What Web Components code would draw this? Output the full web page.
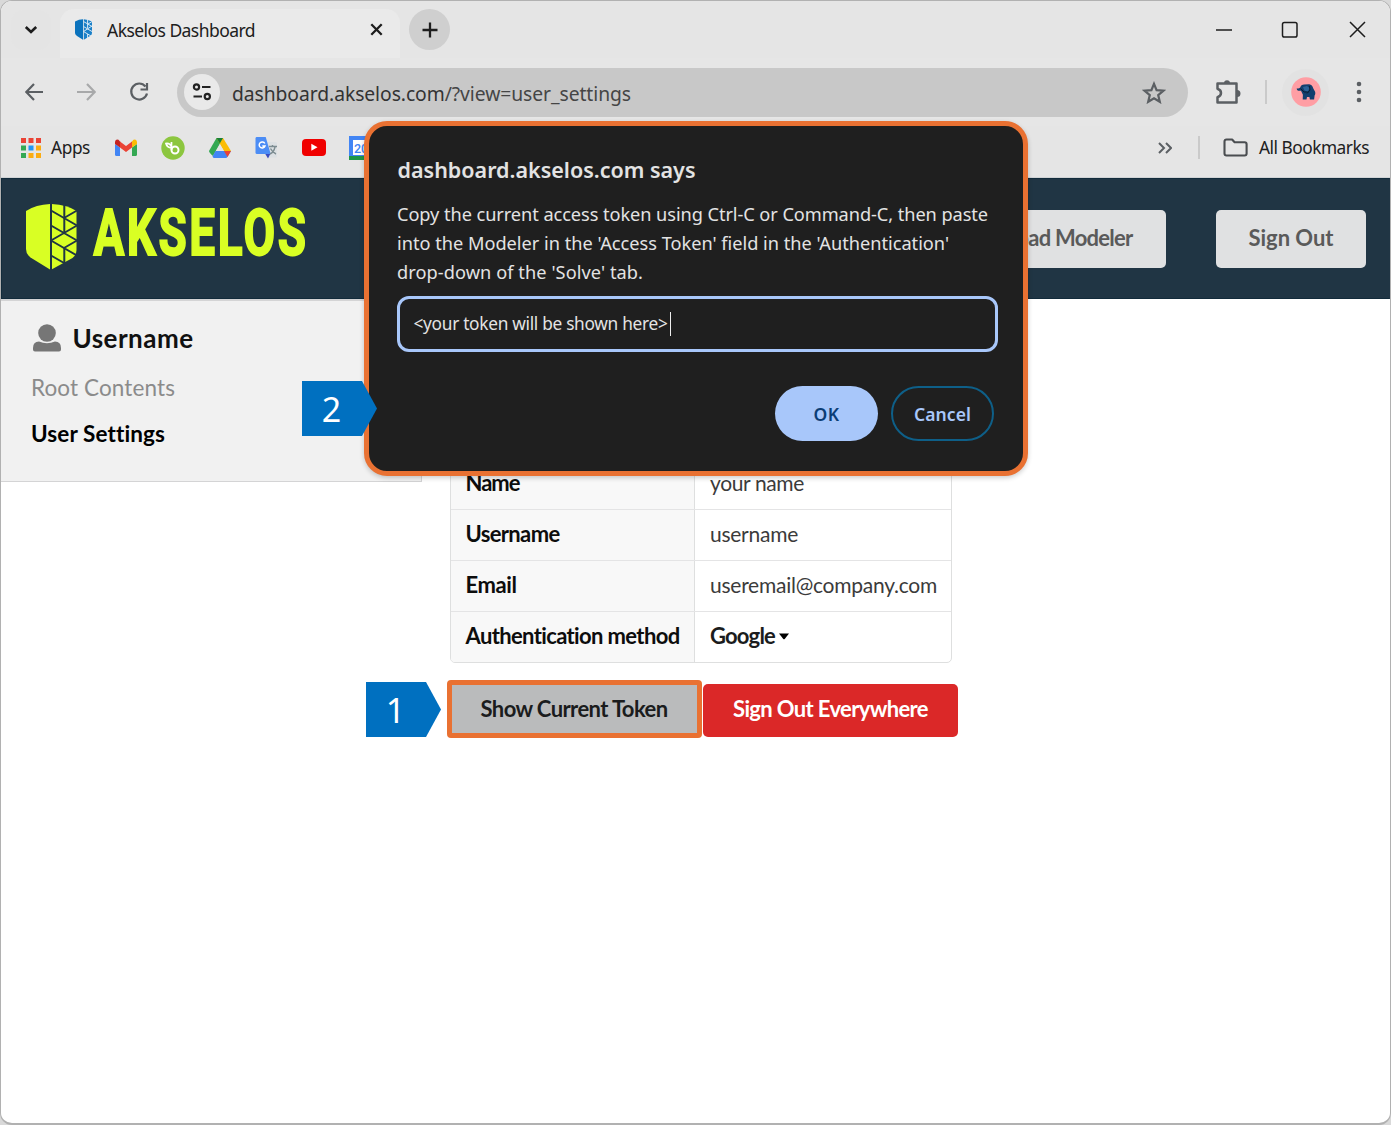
<!DOCTYPE html>
<html lang="en">
<head>
<meta charset="utf-8">
<title>Akselos Dashboard</title>
<style>
  html, body{ margin:0; width:1391px; height:1125px; overflow:hidden; background:#d9d9d9; }
  body{ font-family:"Noto Sans","Open Sans",sans-serif; color:#202020; }
</style>
</head>
<body>
<browser-window>
  <tab-strip slot="chrome" label="Akselos Dashboard"></tab-strip>
  <nav-toolbar slot="chrome"></nav-toolbar>
  <bookmark-bar slot="chrome"></bookmark-bar>
  <site-header>
    <ui-button kind="header" style="width:244px"><fit-text w="177">Download Modeler</fit-text></ui-button>
    <ui-button kind="header" style="width:150px"><fit-text w="85">Sign Out</fit-text></ui-button>
  </site-header>
  <page-body>
    <side-menu slot="side" user="Username"></side-menu>
    <settings-table></settings-table>
    <div style="display:flex;align-items:center;gap:1px;margin:17px 0 0 -3px">
      <ui-button kind="token"><fit-text w="187">Show Current Token</fit-text></ui-button>
      <ui-button kind="danger"><fit-text w="195">Sign Out Everywhere</fit-text></ui-button>
    </div>
  </page-body>
  <prompt-dialog slot="overlay"></prompt-dialog>
  <step-callout slot="overlay" style="left:302px;top:381px">2</step-callout>
  <step-callout slot="overlay" style="left:366px;top:682px">1</step-callout>
</browser-window>

<script>
function define(name, html, setup){
  customElements.define(name, class extends HTMLElement{
    constructor(){
      super();
      this.attachShadow({mode:"open"}).innerHTML = html;
    }
    connectedCallback(){ if(setup) setup(this, this.shadowRoot); }
  });
}

/* ---------- window frame ---------- */
define("browser-window", `
  <style>
    :host{ display:flex; flex-direction:column; position:relative; box-sizing:border-box; width:1391px; height:1125px;
      border:1px solid #b1b1b1; border-bottom-width:2px; border-radius:12px; overflow:hidden; background:#fff; }
    .chrome{ height:177px; background:#e5e5e5; border-bottom:1px solid #d0d3d5; box-sizing:border-box; }
  </style>
  <div class="chrome"><slot name="chrome"></slot></div>
  <slot></slot>
  <slot name="overlay"></slot>
`);

define("tab-strip", `
  <style>
    :host{ display:flex; height:57px; align-items:center; box-sizing:border-box; }
    .search{ width:40px; margin-left:10px; height:40px; border-radius:13px; background:#e4e4e4; display:grid; place-items:center; }
    .tab{ display:flex; align-items:center; width:340px; height:49px; margin:8px 0 0 9px; padding:0 17px 8px 15px; box-sizing:border-box;
      background:#eaeaea; border-radius:14px 14px 0 0; font-size:17.500px; }
    .fav{ margin-right:15px; }
    .x{ margin-left:auto; }
    .new{ width:41px; height:41px; border-radius:50%; background:#cfcfcf; margin-left:9px; display:grid; place-items:center; }
    .win{ margin-left:auto; display:flex; align-items:center; gap:49.700px; margin-right:24px; }
    svg{ display:block; fill:none; stroke:#1d1d1d; }
  </style>
  <div class="search"><svg width="14" height="10" viewBox="0 0 14 10" stroke-width="2.6"><path d="M1.8 2l5.2 5 5.2-5"/></svg></div>
  <div class="tab">
    <svg class="fav" width="17" height="21" viewBox="0 0 17 21" style="stroke:none">
      <path fill="#0b73bd" d="M0 2.5Q4 .3 8 .2V20.8L2 17Q0 15.6 0 14z"/>
      <path fill="#1b80c8" d="M8.8.2Q13 .5 17 2.5V14q0 1.800-2 3L8.800 20.800z"/>
      <path stroke="#d5e7f4" stroke-width="1" fill="none" d="M8.500 2.500l8.500 5M8.500 7.500l8.500 5M17 7l-8.500 5.500M8.500 12.500l7.500 4.500M12.600 0v9M12.600 15v4M17 2.500l-4 2.500"/>
    </svg>
    <fit-text w="148"></fit-text>
    <svg class="x" width="13" height="13" viewBox="0 0 13 13" stroke-width="2.300"><path d="M1.300 1.300l10.400 10.400M11.700 1.300L1.300 11.700"/></svg>
  </div>
  <div class="new"><svg width="16" height="16" viewBox="0 0 16 16" stroke-width="2.300"><path d="M8 .5v15M.5 8h15"/></svg></div>
  <div class="win">
    <svg width="16" height="16" viewBox="0 0 16 16" stroke-width="1.500"><path d="M0 8h16"/></svg>
    <svg width="18" height="18" viewBox="0 0 18 18" stroke-width="1.500"><rect x="1.500" y="1.500" width="14.500" height="14.500" rx="1.800"/></svg>
    <svg width="17" height="17" viewBox="0 0 17 17" stroke-width="1.500"><path d="M1 1l15 15M16 1L1 16"/></svg>
  </div>
`, (el, root) => { root.querySelector("fit-text").textContent = el.getAttribute("label"); });

/* ---------- toolbar ---------- */
define("nav-toolbar", `
  <style>
    :host{ display:flex; align-items:center; height:68px; padding-left:23px; background:#e6e6e6; }
    svg{ display:block; flex:none; fill:none; stroke:#5b5f63; stroke-width:2.200; }
    .bar{ display:flex; align-items:center; width:1011px; height:49px; margin-left:28px; border-radius:25px; background:#c8c8c8;
      padding:0 22px 0 7px; box-sizing:border-box; color:#454545; font-size:19.300px; }
    .bar fit-text{ padding-top:2px; }
    .site{ width:36px; height:36px; border-radius:50%; background:#e9e9e9; display:grid; place-items:center; margin-right:12px; }
    .star{ margin-left:auto; }
    .sep{ width:2px; height:24px; background:#cacaca; margin:0 9px 0 24px; }
    .who{ width:47px; height:47px; border-radius:50%; background:#e2e2e2; display:grid; place-items:center; margin-left:6px; }
  </style>
  <svg width="20" height="18" viewBox="0 0 20 18"><path d="M19 9H3M10 1L2.300 9l7.700 8"/></svg>
  <svg width="20" height="18" viewBox="0 0 20 18" style="margin-left:33px;stroke:#a8a9aa"><path d="M0 9h17M10 1l7.700 8-7.700 8"/></svg>
  <svg width="20" height="20" viewBox="0 0 20 20" style="margin-left:32px"><path d="M16.500 4.500A8 8 0 1 0 18 11.500M18 1v6.500h-6.500"/></svg>
  <div class="bar">
    <div class="site"><svg width="20" height="18" viewBox="0 0 20 18" style="stroke:#222"><circle cx="4.500" cy="4" r="2.600"/><path d="M10 4h8.500M1.500 13.500H10"/><circle cx="15.300" cy="13.500" r="2.600"/></svg></div>
    <fit-text w="399"><span style="color:#333">dashboard.akselos.com</span>/?view=user_settings</fit-text>
    <svg class="star" width="24" height="23" viewBox="0 0 24 23"><path d="M12 2.800l2.600 6.300 6.800.600-5.200 4.400 1.600 6.700L12 17.200l-5.800 3.600 1.600-6.700L2.600 9.700l6.800-.600z"/></svg>
  </div>
  <svg width="26" height="25" viewBox="0 0 26 25" style="margin-left:27px;stroke-width:2.500">
    <path stroke-linejoin="round" d="M2.500 3.500h19v19h-19v-5.300q3.500-1.200 3.500-4.200t-3.500-4.200z"/>
    <path fill="#5b5f63" stroke="none" d="M9 3.200a3 3 0 0 1 6 0zM22 10a3.500 3.500 0 0 1 0 7z"/>
  </svg>
  <div class="sep"></div>
  <div class="who"><svg width="30" height="30" viewBox="0 0 30 30" style="stroke:none">
    <circle cx="15" cy="15" r="14.800" fill="#ff9ea4"/>
    <path fill="#123f6e" d="M5.800 11.200q1.800 1 3.400-.8.800-2.800 4-3l5-.1q3.200.600 4 4l2 3.800q.500 2.500-.6 3.300l-.5 4h-4.200l-.500-2.500-2.400.1-.500 2.500h-3.800l.2-4.800-1.900-4q-4.400.8-4.200-2.500z"/>
    <path fill="#2a6298" d="M12 10l4-1 2.500 2-1.800 4-3.500-1.800z"/>
    <path stroke="#0b1e36" stroke-width="1" d="M9.500 11.500l3.500 3.500 4.500 0M18.500 9l.5 4-3 3.500"/>
  </svg></div>
  <svg width="6" height="24" viewBox="0 0 6 24" style="margin-left:27px;fill:#5b5f63;stroke:none"><circle cx="3" cy="4" r="2.300"/><circle cx="3" cy="12" r="2.300"/><circle cx="3" cy="20" r="2.300"/></svg>
`);

/* ---------- bookmarks ---------- */
define("bookmark-bar", `
  <style>
    :host{ display:flex; align-items:center; height:43px; padding-left:19.500px; font-size:17.300px; }
    svg{ display:block; flex:none; }
    .right{ position:relative; margin-left:auto; display:flex; align-items:center; margin-right:21px; }
    i{ width:2px; height:23px; background:#cacaca; margin:0 23px 0 26px; }
  </style>
  <svg width="20" height="20" viewBox="0 0 20 20">
    <path fill="#ea4335" d="M0 0h5v5H0zM7.500 0h5v5h-5zM15 0h5v5h-5z"/>
    <path fill="#34a853" d="M0 7.500h5v5H0zM0 15h5v5H0z"/><path fill="#2196f3" d="M7.500 7.500h5v5h-5z"/>
    <path fill="#fbac12" d="M15 7.500h5v5h-5zM7.500 15h5v5h-5zM15 15h5v5h-5z"/>
  </svg>
  <fit-text w="39" style="margin-left:10.500px">Apps</fit-text>
  <svg width="22" height="17" viewBox="0 0 22 17" style="margin-left:24.500px">
    <path fill="#4285f4" d="M0 5l5 3.500V17H1.500Q0 17 0 15.500z"/><path fill="#34a853" d="M22 5l-5 3.500V17h3.500Q22 17 22 15.500z"/>
    <path fill="#ea4335" d="M5 2.500l6 4.500 6-4.500v6L11 13 5 8.500z"/><path fill="#c5221f" d="M0 3Q.300-.5 3.500.8L5 2.500v6L0 5z"/><path fill="#fbbc04" d="M22 3q-.300-3.500-3.500-2.200L17 2.500v6L22 5z"/>
  </svg>
  <svg width="24" height="24" viewBox="0 0 24 24" style="margin-left:24px">
    <circle cx="12" cy="12" r="11.700" fill="#8cc63f"/>
    <circle cx="14" cy="14" r="3.500" fill="none" stroke="#fff" stroke-width="2"/><path fill="none" stroke="#fff" stroke-width="1.700" d="M10.500 14V6M10.500 12Q6 11.500 5 7.500q4-.5 5.500 3.500"/>
  </svg>
  <svg width="22" height="20" viewBox="0 0 22 20" style="margin-left:24px">
    <path fill="#34a853" d="M7.500 0H14L4 18q-4-3.500-4-5z"/><path fill="#fbbc04" d="M7.500 0H14l8 13h-7z"/>
    <path fill="#4285f4" d="M6.500 13H22l-3.300 5.500Q18 20 16.500 20h-11Q4 20 3.500 18.500z"/><path fill="#ea4335" d="M15 13h7l-3.500 6z"/><path fill="#188038" d="M7.500 0H14l-3.200 5.500z"/>
    <path fill="#e5e5e5" d="M10.900 6.200l3.900 6.600H7.100z"/>
  </svg>
  <svg width="23" height="22" viewBox="0 0 23 22" style="margin-left:24px">
    <path fill="#dce0e3" d="M9 5h11.500q1.500 0 1.500 1.500v13q0 1-1 1H13z"/><path fill="#3a4cc0" d="M10 16.500h5.500l-2.500 5z"/>
    <path fill="#4c8df5" d="M1.500 0h9.200l5 17H2Q.5 17 .5 15.500V1.500Q.5 0 1.500 0z"/>
    <path fill="none" stroke="#fff" stroke-width="1.500" d="M9.800 6.500A3 3 0 1 0 10 9H7.300"/><path fill="none" stroke="#7d8c91" stroke-width="1.400" d="M14 9.500h8M17.500 8v1.500M20 10q-1 5-5 7M15.500 11.500q2 4 5.500 5.500"/>
  </svg>
  <svg width="24" height="17" viewBox="0 0 24 17" style="margin-left:24px"><rect width="24" height="17" rx="4" fill="#f00000"/><path fill="#fff" d="M9.300 4.800l6.200 3.500-6.200 3.500z"/></svg>
  <svg width="24" height="24" viewBox="0 0 24 24" style="margin-left:23px">
    <path fill="#4285f4" d="M0 0h24v20H0z"/><path fill="#1e9648" d="M0 20h24v4H0z"/><path fill="#fff" d="M4 4h16v15H4z"/>
    <text x="5" y="16.500" font-size="12.500" font-family="Roboto,sans-serif" font-weight="500" fill="#4285f4">20</text>
  </svg>
  <div class="right">
    <svg width="14" height="12" viewBox="0 0 14 12" fill="none" stroke="#5b5f63" stroke-width="2"><path d="M1 1l5 5-5 5M8 1l5 5-5 5"/></svg>
    <i></i>
    <svg width="25" height="19" viewBox="0 0 25 19" fill="none" stroke="#4a4d50" stroke-width="2.100"><path stroke-linejoin="round" d="M1.500 15.500v-12q0-2 2-2h5.600l2.500 2.800h10q2 0 2 2v9.200q0 2-2 2H3.500q-2 0-2-2z"/></svg>
    <fit-text w="110" style="margin-left:11px">All Bookmarks</fit-text>
  </div>
`);

/* ---------- site header ---------- */
define("site-header", `
  <style>
    :host{ display:flex; align-items:center; flex:none; height:121px; box-sizing:border-box; background:#203544; border:1px solid #122b3b; padding:0 23px 0 23.500px; border-right-color:#203544; }
    .btns{ margin-left:auto; display:flex; gap:50px; }
    svg{ display:block; overflow:visible; margin-top:-4px; }
    text{ font-family:Roboto,sans-serif; font-weight:700; }
  </style>
  <svg width="300" height="84" viewBox="0 -8 300 84" fill="#d9ff24">
    <path d="M0 8Q10 1.500 24 1v65.500L4.500 54.500Q0 51 0 46z"/>
    <path d="M25.500 1Q42 2 50.500 8v39q0 5-4 8L25.500 66.500z"/>
    <g fill="none" stroke="#203544" stroke-width="2">
      <path d="M25 0v68M38.300 0v30M38.300 45v15"/>
      <path d="M25 7.500l26 15M51 7.500L38 15M25 22.500l26 15M51 22.500L25 37.500M25 37.500l26 15M51 37.500L38 45M25 52.500l20 11.500"/>
    </g>
    <text x="67.500" y="52.300" font-size="64" textLength="215" lengthAdjust="spacingAndGlyphs" letter-spacing="3.500" stroke="#d9ff24" stroke-width="1.900" stroke-linejoin="miter">AKSELOS</text>
  </svg>
  <div class="btns"><slot></slot></div>
`);

define("ui-button", `
  <style>
    :host{ display:flex; flex:none; align-items:center; justify-content:center; box-sizing:border-box; border-radius:5px;
      font-family:Lato,sans-serif; font-weight:700; font-size:22px; line-height:28px; }
    :host([kind="header"]){ height:58px; background:#e0e1e2; color:#5a5a5a; padding-bottom:1px; }
    :host([kind="token"]){ width:255px; height:58px; background:#babbbc; color:#1b1c1d; border:5px solid #e97132; border-radius:4px; padding-right:1px; }
    :host([kind="danger"]){ width:255px; height:53px; margin-top:2px; background:#db2828; color:#fff; padding-bottom:2px; }
  </style>
  <slot></slot>
`);

/* ---------- page ---------- */
define("page-body", `
  <style>
    :host{ display:flex; align-items:flex-start; flex:1; }
    main{ margin:158px 0 0 28px; }
  </style>
  <slot name="side"></slot>
  <main><slot></slot></main>
`);

define("side-menu", `
  <style>
    :host{ display:block; width:421px; height:183px; box-sizing:border-box; background:#f1f1f1; border:solid #d4d4d5; border-width:2px 1px 1px 0;
      padding:18px 0 0 30px; font-family:Lato,sans-serif; font-size:22.500px; color:#000; }
    .user{ display:flex; align-items:center; height:38px; font-size:26px; font-weight:700; color:#111; }
    svg{ margin:0 11.500px 0 2px; }
    .item{ height:46px; line-height:46px; margin-top:8px; color:#8b8b8b; }
    .item.on{ margin-top:0; color:#000; font-weight:700; }
  </style>
  <div class="user">
    <svg width="28" height="28" viewBox="0 0 28 28" fill="#767676"><circle cx="14" cy="9" r="8.800"/><path d="M0 24q0-6.500 6-6.500 8 3.500 16 0 6 0 6 6.500v1.500q0 2-2 2H2q-2 0-2-2z"/></svg>
    <fit-text w="121"></fit-text>
  </div>
  <div class="item"><fit-text w="144">Root Contents</fit-text></div>
  <div class="item on"><fit-text w="134">User Settings</fit-text></div>
`, (el, root) => { root.querySelector("fit-text").textContent = el.getAttribute("user"); });

define("settings-table", `
  <style>
    :host{ display:block; width:502px; box-sizing:border-box; border:1px solid #dedfdf; border-radius:5px; overflow:hidden;
      font-family:Lato,sans-serif; font-size:21px; color:#3b3b3b; }
    .row{ display:grid; grid-template-columns:244px 1fr; height:51px; box-sizing:border-box; border-top:1px solid #e4e4e5; }
    .row:first-child{ border-top:0; }
    .row > div{ padding:0 14.500px 4px; display:flex; align-items:center; }
    .row > div + div{ padding-left:15px; }
    .k{ background:#f8f8f8; border-right:1px solid #dedfdf; font-weight:700; font-size:22px; color:#0d0d0d; }
    .sel{ font-weight:700; font-size:22px; color:#1b1c1d; }
    svg{ margin:2px 0 0 4px; }
  </style>
  <div class="row"><div class="k"><fit-text w="54">Name</fit-text></div><div><fit-text w="94">your name</fit-text></div></div>
  <div class="row"><div class="k"><fit-text w="94">Username</fit-text></div><div><fit-text w="88">username</fit-text></div></div>
  <div class="row"><div class="k"><fit-text w="51">Email</fit-text></div><div><fit-text w="227">useremail@company.com</fit-text></div></div>
  <div class="row"><div class="k"><fit-text w="214">Authentication method</fit-text></div><div class="sel"><fit-text w="65">Google</fit-text><svg width="10" height="7" viewBox="0 0 10 7"><path d="M0 .5h10L5.700 6q-.7.700-1.400 0z"/></svg></div></div>
`);

/* ---------- overlays ---------- */
define("prompt-dialog", `
  <style>
    :host{ position:absolute; left:363px; top:120px; width:664px; height:355px; box-sizing:border-box; padding:29px 25px 0 27.500px;
      background:#1f1f1f; border:5px solid #e97132; border-radius:23px; box-shadow:0 2px 5px rgba(0,0,0,.2); color:#e3e3e3; font-size:18.200px; }
    h1{ margin:0 0 0 1px; font-size:21.500px; font-weight:600; line-height:30px; height:30px; }
    .msg{ margin:15px 0 0 .5px; line-height:29.200px; }
    .msg fit-text{ display:block; }
    .field{ display:flex; align-items:center; height:56px; margin-top:8px; width:601px; box-sizing:border-box; border:3px solid #a8c7fa; border-radius:12px;
      padding:0 14px; font-size:17.300px; }
    .caret{ width:1px; height:24px; background:#eee; margin-left:2px; }
    .actions{ display:flex; justify-content:flex-end; gap:13px; margin:34px 4px 0 0; font-weight:600; font-size:17.500px; }
    .actions div{ display:grid; place-items:center; width:103px; height:55px; border-radius:28px; box-sizing:border-box; padding-top:2px; }
    .ok{ background:#a8c7fa; color:#0b3d75; }
    .cancel{ border:2px solid #0e5f88; color:#a8c7fa; }
  </style>
  <h1><fit-text w="298">dashboard.akselos.com says</fit-text></h1>
  <div class="msg">
    <fit-text w="591">Copy the current access token using Ctrl-C or Command-C, then paste</fit-text>
    <fit-text w="552">into the Modeler in the 'Access Token' field in the 'Authentication'</fit-text>
    <fit-text w="246">drop-down of the 'Solve' tab.</fit-text>
  </div>
  <div class="field"><fit-text w="254">&lt;your token will be shown here&gt;</fit-text><span class="caret"></span></div>
  <div class="actions"><div class="ok"><fit-text w="26">OK</fit-text></div><div class="cancel"><fit-text w="57">Cancel</fit-text></div></div>
`);

define("step-callout", `
  <style>
    :host{ position:absolute; display:flex; align-items:center; justify-content:center; width:75px; height:55px; margin:-1px 0 0 -1px;
      box-sizing:border-box; padding:2px 16px 0 0; background:#0070c0; color:#fff; font-size:34px; line-height:53px;
      clip-path:polygon(0 0,60px 0,100% 50%,60px 100%,0 100%); }
  </style>
  <slot></slot>
`);

/* one line of text, tracked to the width given in w; defined last so the parents' fonts already apply */
define("fit-text", `
  <style>:host{ display:inline-block; white-space:nowrap; font-variant-ligatures:none; } span{ display:inline-block; }</style>
  <span><slot></slot></span>
`, (el, root) => {
  const span = root.querySelector("span");
  const target = Number(el.getAttribute("w"));
  const count = el.textContent.length;
  if(!target || !count) return;
  const natural = span.getBoundingClientRect().width;
  el.style.letterSpacing = ((target - natural) / count).toFixed(3) + "px";
  el.style.width = target + "px";
});
</script>
</body>
</html>
